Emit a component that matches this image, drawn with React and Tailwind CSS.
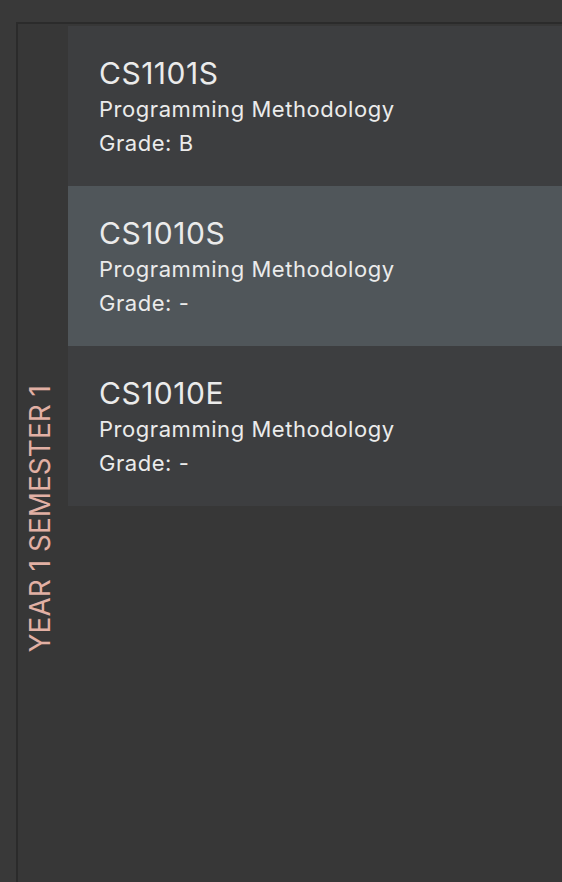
export default function App() {
  const mods = [
    { code: "CS1101S", name: "Programming Methodology", grade: "B", active: false },
    { code: "CS1010S", name: "Programming Methodology", grade: "-", active: true },
    { code: "CS1010E", name: "Programming Methodology", grade: "-", active: false },
  ];
  return (
    <div
      className="h-[882px] w-[562px] overflow-hidden bg-[#393939] pl-[16px] pt-[22px]"
      style={{ fontFamily: "Inter, 'Noto Sans', sans-serif" }}
    >
      <div className="flex h-[992px] border-l-2 border-t-2 border-[#2b2b2b] bg-[#373737]">
        <div className="flex w-[50px] shrink-0 items-center justify-center pr-[6px]">
          <div className="rotate-180 text-[28px] leading-none tracking-[0px] text-[#e2b0a4] [writing-mode:vertical-rl] whitespace-nowrap">
            YEAR 1 SEMESTER 1
          </div>
        </div>
        <div className="flex flex-1 flex-col pt-[2px]">
          {mods.map((m) => (
            <div
              key={m.code}
              className={`h-[160px] pl-[31px] pt-[30px] text-[#ebebeb] ${m.active ? "bg-[#50565a]" : "bg-[#3d3e40]"}`}
            >
              <div className="text-[30px] leading-[34px] tracking-[0.5px]">{m.code}</div>
              <div className="mt-[2px] text-[22px] leading-[34px] tracking-[0.55px]">{m.name}</div>
              <div className="text-[22px] leading-[34px] tracking-[0.55px]">Grade: {m.grade}</div>
            </div>
          ))}
        </div>
      </div>
    </div>
  );
}
